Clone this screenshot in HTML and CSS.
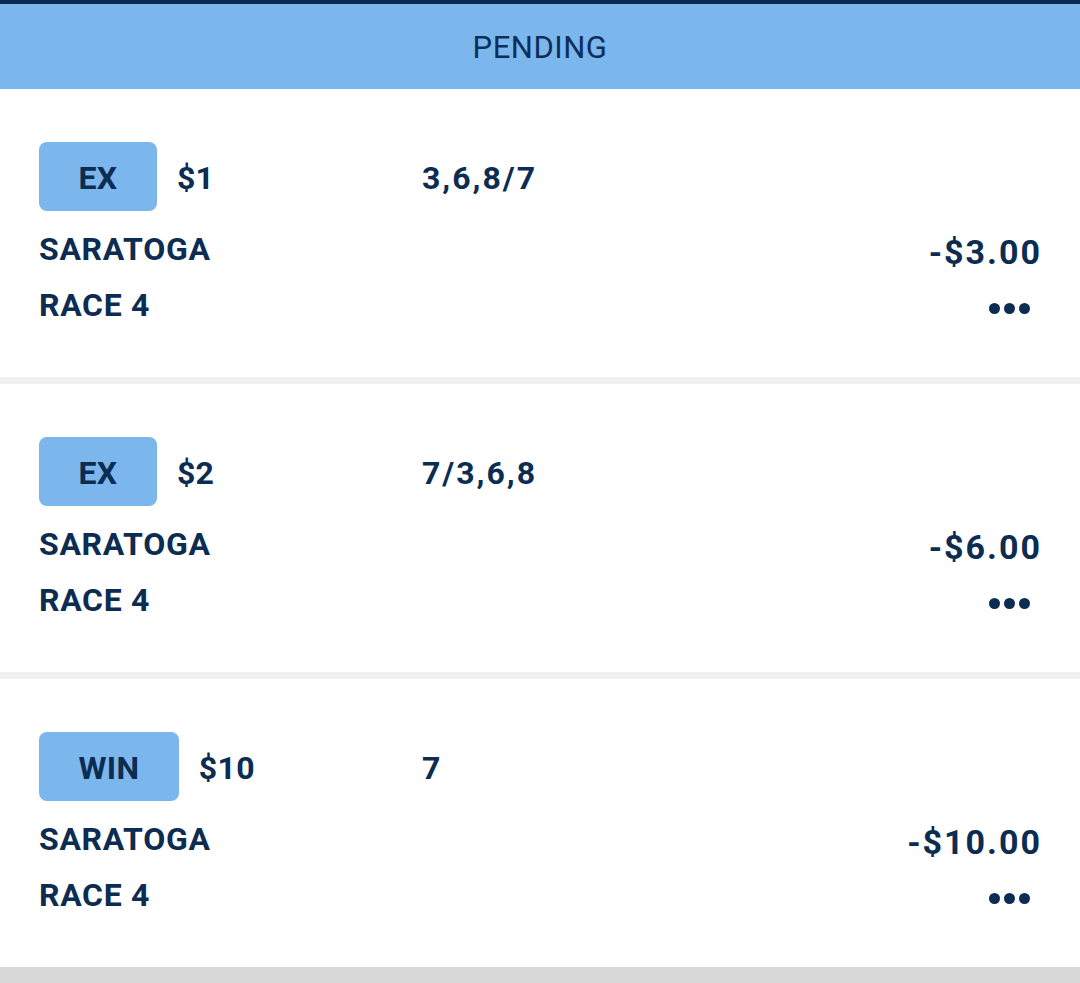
FILE: index.html
```html
<!DOCTYPE html>
<html lang="en">
<head>
<meta charset="utf-8">
<title>Pending bets</title>
<link rel="stylesheet" href="styles.css">
</head>
<body>
<div class="topbar"></div>
<header class="tabbar">PENDING</header>
<main class="bets">
  <article class="bet">
    <div class="bet-top">
      <div class="lead">
        <span class="badge">EX</span>
        <span class="stake">$1</span>
      </div>
      <span class="selection">3,6,8/7</span>
    </div>
    <div class="bet-bottom">
      <div class="info">
        <div class="line">SARATOGA</div>
        <div class="line">RACE 4</div>
      </div>
      <div class="side">
        <div class="amount">-$3.00</div>
        <div class="more"><i></i><i></i><i></i></div>
      </div>
    </div>
  </article>
  <article class="bet">
    <div class="bet-top">
      <div class="lead">
        <span class="badge">EX</span>
        <span class="stake">$2</span>
      </div>
      <span class="selection">7/3,6,8</span>
    </div>
    <div class="bet-bottom">
      <div class="info">
        <div class="line">SARATOGA</div>
        <div class="line">RACE 4</div>
      </div>
      <div class="side">
        <div class="amount">-$6.00</div>
        <div class="more"><i></i><i></i><i></i></div>
      </div>
    </div>
  </article>
  <article class="bet">
    <div class="bet-top">
      <div class="lead">
        <span class="badge">WIN</span>
        <span class="stake">$10</span>
      </div>
      <span class="selection">7</span>
    </div>
    <div class="bet-bottom">
      <div class="info">
        <div class="line">SARATOGA</div>
        <div class="line">RACE 4</div>
      </div>
      <div class="side">
        <div class="amount">-$10.00</div>
        <div class="more"><i></i><i></i><i></i></div>
      </div>
    </div>
  </article>
</main>
<div class="footer-strip"></div>
</body>
</html>
```
FILE: styles.css
```css
* { box-sizing: border-box; }
html, body {
  margin: 0;
  padding: 0;
  background: #ffffff;
  font-family: Roboto, "Noto Sans", "Liberation Sans", sans-serif;
  color: #0c2c52;
}
.topbar {
  height: 4px;
  background: #0a2a52;
}
.tabbar {
  height: 85px;
  background: #7bb6ed;
  display: flex;
  align-items: center;
  justify-content: center;
  font-size: 31px;
  font-weight: 400;
  letter-spacing: 0.5px;
  color: #0d2f5a;
  padding-top: 2px;
}
.bets {
  display: flex;
  flex-direction: column;
}
.bet {
  height: 295px;
  padding: 53px 40px 0 39px;
  border-bottom: 7px solid #f0f0f0;
}
.bet:last-child {
  height: 288px;
  border-bottom: none;
}
.bet-top {
  display: flex;
  align-items: center;
  height: 69px;
}
.lead {
  width: 385px;
  display: flex;
  align-items: center;
}
.badge {
  height: 69px;
  padding: 3px 39.5px 0;
  background: #7bb6ed;
  border-radius: 8px;
  display: flex;
  align-items: center;
  font-size: 32px;
  font-weight: 700;
  letter-spacing: 0.3px;
}
.stake, .selection {
  font-size: 32px;
  font-weight: 700;
  padding-top: 3px;
  letter-spacing: 0.3px;
}
.selection { letter-spacing: 2px; margin-left: -2px; }
.stake { margin-left: 20px; }
.bet-bottom {
  display: flex;
  justify-content: space-between;
  margin-top: 10px;
}
.line {
  font-size: 32px;
  font-weight: 700;
  line-height: 56px;
  letter-spacing: 0.7px;
}
.side {
  display: flex;
  flex-direction: column;
  align-items: flex-end;
}
.amount {
  margin-top: 3px;
  font-size: 34px;
  font-weight: 700;
  letter-spacing: 2px;
  line-height: 56px;
  margin-right: -2px;
}
.more {
  height: 56px;
  display: flex;
  align-items: center;
  gap: 4px;
  margin-right: 10px;
}
.more i {
  display: block;
  width: 11px;
  height: 11px;
  border-radius: 50%;
  background: #0c2c52;
}
.footer-strip {
  height: 20px;
  background: #d8d8d8;
}
```
